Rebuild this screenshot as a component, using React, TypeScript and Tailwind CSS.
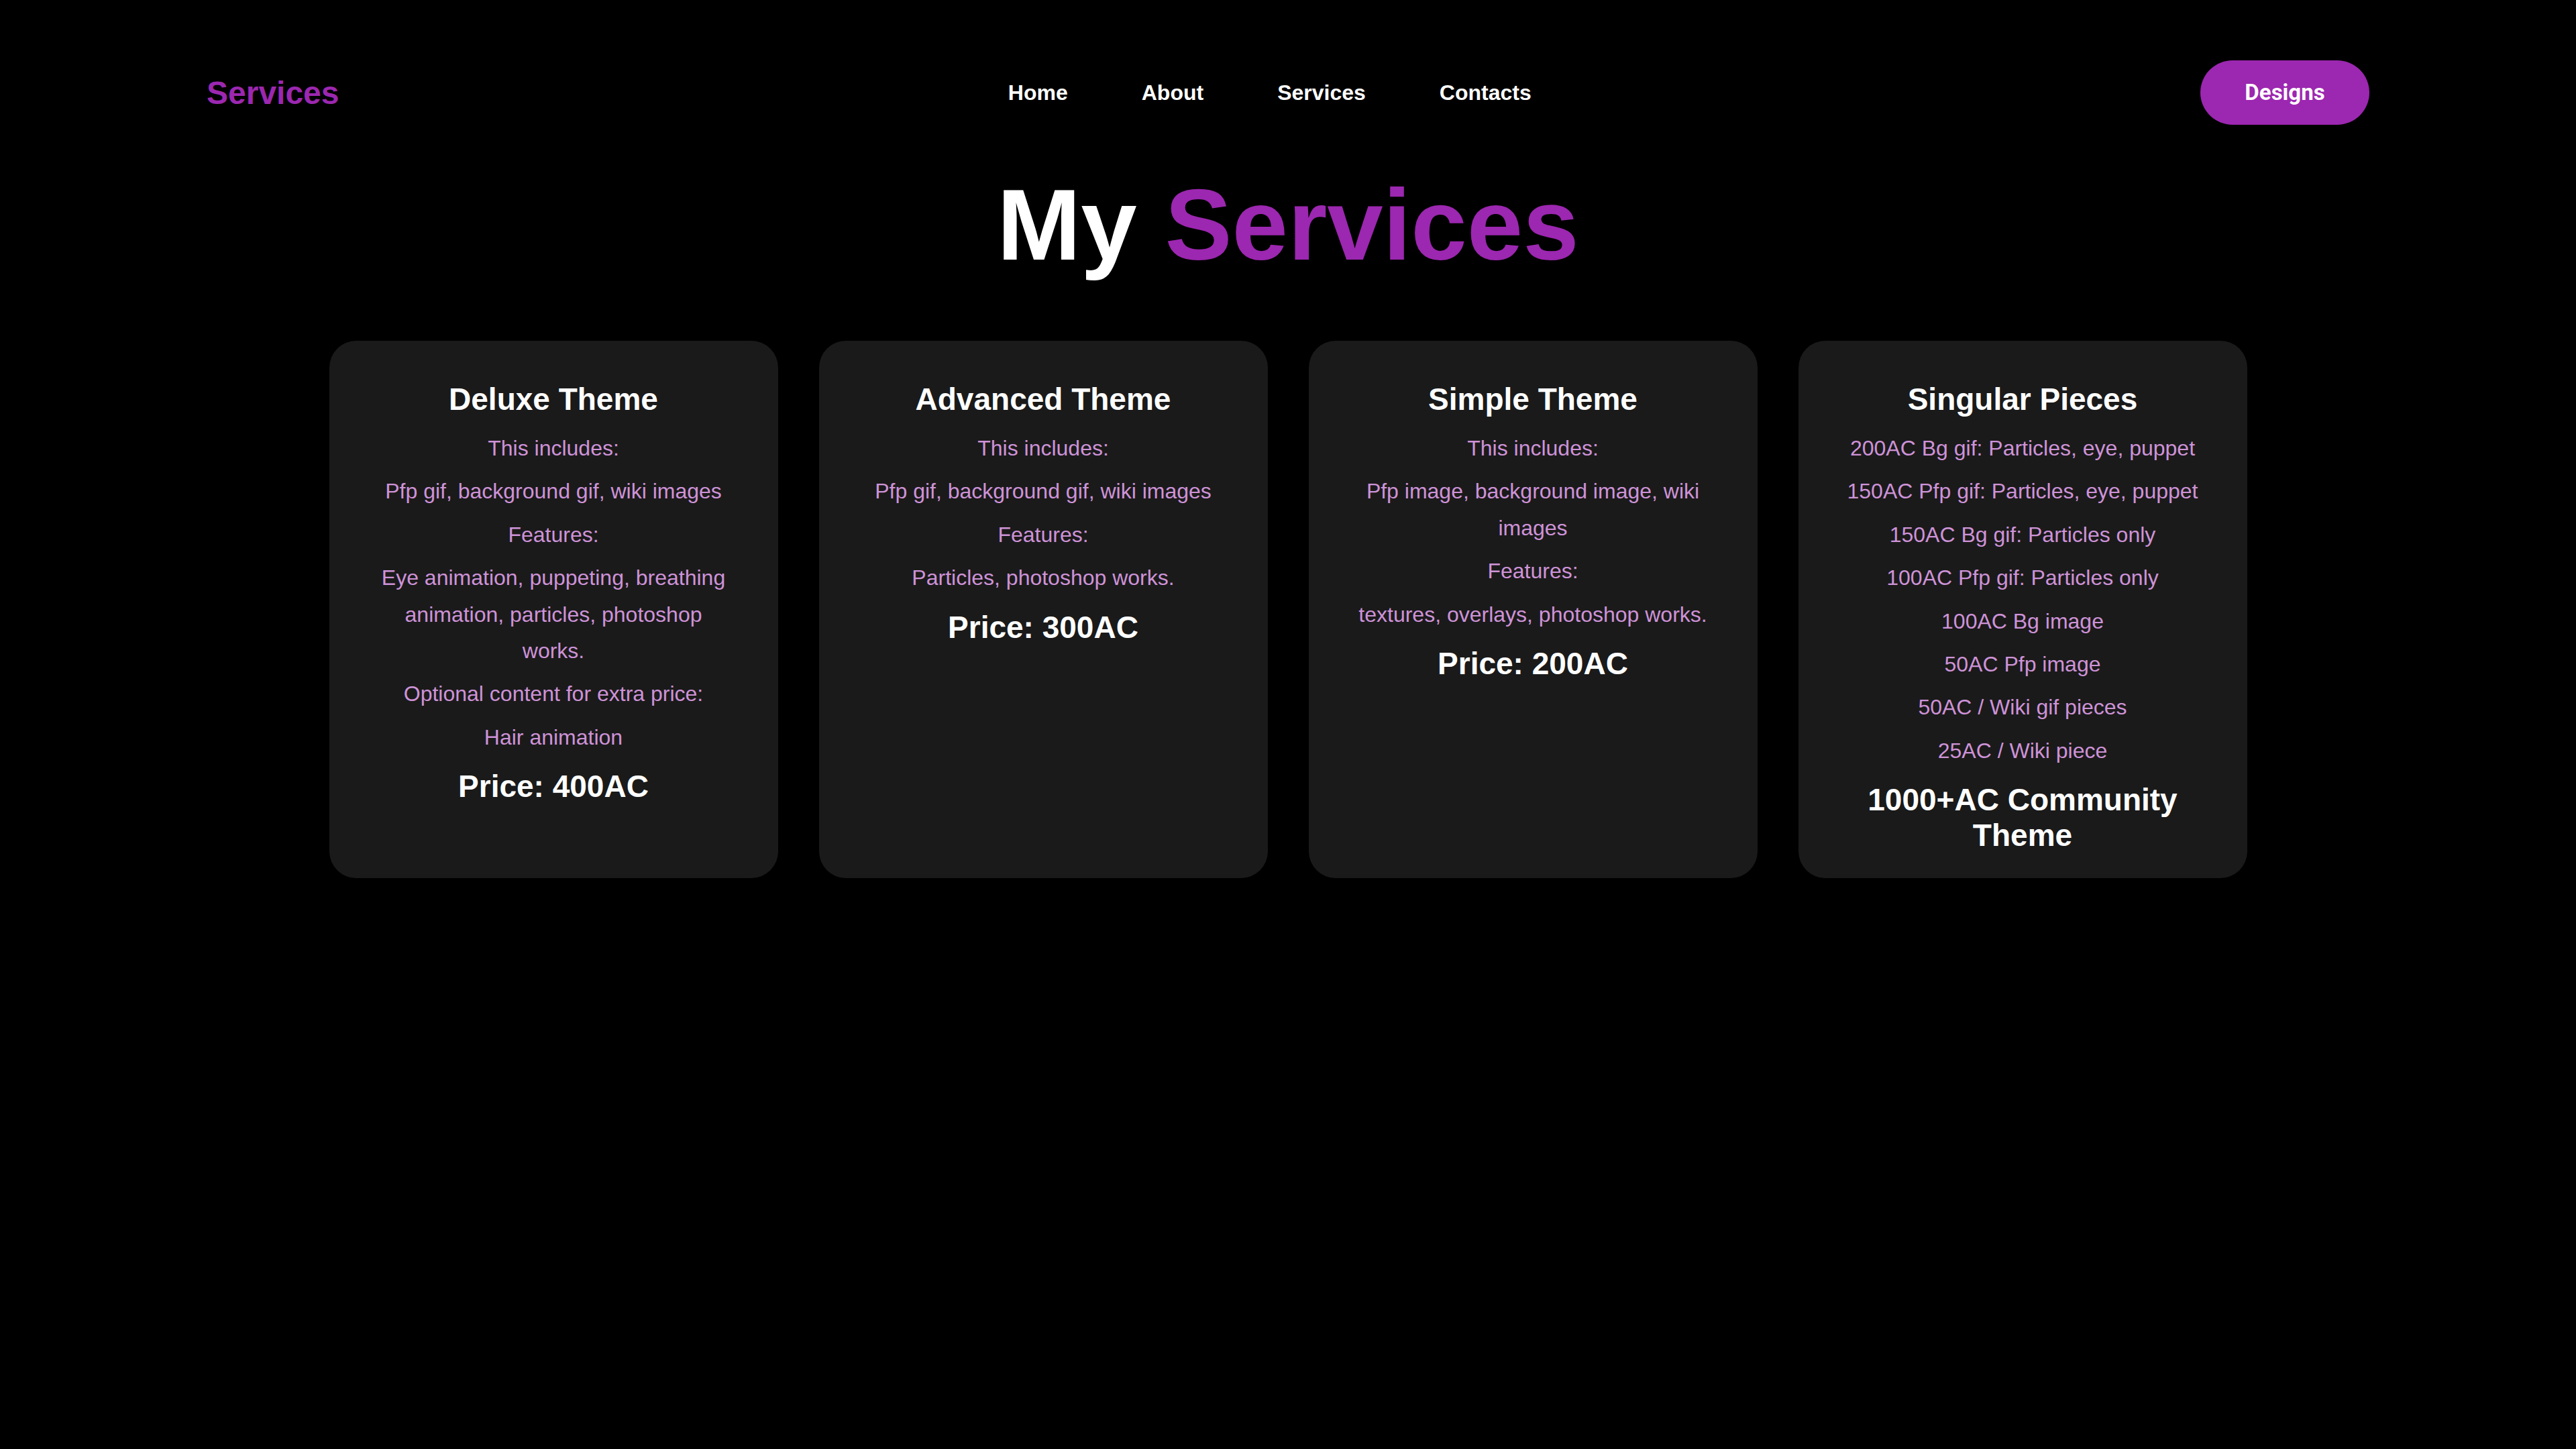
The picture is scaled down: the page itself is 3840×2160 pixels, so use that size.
import React from "react";

const CARDS = [
  {
    title: "Deluxe Theme",
    lines: [
      "This includes:",
      "Pfp gif, background gif, wiki images",
      "Features:",
      "Eye animation, puppeting, breathing animation, particles, photoshop works.",
      "Optional content for extra price:",
      "Hair animation",
    ],
    price: "Price: 400AC",
  },
  {
    title: "Advanced Theme",
    lines: [
      "This includes:",
      "Pfp gif, background gif, wiki images",
      "Features:",
      "Particles, photoshop works.",
    ],
    price: "Price: 300AC",
  },
  {
    title: "Simple Theme",
    lines: [
      "This includes:",
      "Pfp image, background image, wiki images",
      "Features:",
      "textures, overlays, photoshop works.",
    ],
    price: "Price: 200AC",
  },
  {
    title: "Singular Pieces",
    lines: [
      "200AC Bg gif: Particles, eye, puppet",
      "150AC Pfp gif: Particles, eye, puppet",
      "150AC Bg gif: Particles only",
      "100AC Pfp gif: Particles only",
      "100AC Bg image",
      "50AC Pfp image",
      "50AC / Wiki gif pieces",
      "25AC / Wiki piece",
    ],
    price: "1000+AC Community Theme",
  },
];

const NAV = ["Home", "About", "Services", "Contacts"];

export default function App() {
  return (
    <div className="min-h-screen bg-black font-['Liberation_Sans',Arial,sans-serif] text-white">
      {/* header */}
      <header className="flex items-center justify-between px-[308px] pt-[90px]">
        <div className="text-[48px] font-bold leading-[55px] text-[#9c27b0]">Services</div>
        <nav className="flex items-center">
          {NAV.map((item) => (
            <a key={item} className="mx-[55px] text-[32px] font-bold leading-[37px] text-white">
              {item}
            </a>
          ))}
        </nav>
        <button className="flex h-[96px] w-[252px] items-center justify-center rounded-full bg-[#9c27b0] font-['Roboto',sans-serif] text-[33px] font-bold text-white">
          Designs
        </button>
      </header>

      <h1 className="mt-[74px] text-center text-[150px] font-bold leading-none">
        My <span className="text-[#9c27b0]">Services</span>
      </h1>

      <div className="mt-[98px] flex justify-center gap-[61px]">
        {CARDS.map((card) => (
          <div
            key={card.title}
            className="flex w-[669px] flex-col items-center rounded-[40px] bg-[#1a1a1a] px-[70px] pt-[61px] pb-[37px] text-center"
          >
            <h3 className="text-[46px] font-bold leading-[53px] text-white">{card.title}</h3>
            <div className="mt-[19px] flex flex-col gap-[10px]">
              {card.lines.map((line) => (
                <p key={line} className="text-[32px] leading-[54.4px] text-[#ce93d8]">
                  {line}
                </p>
              ))}
            </div>
            <div className="mt-[20px] text-[46px] font-bold leading-[53px] text-white">{card.price}</div>
          </div>
        ))}
      </div>
    </div>
  );
}
